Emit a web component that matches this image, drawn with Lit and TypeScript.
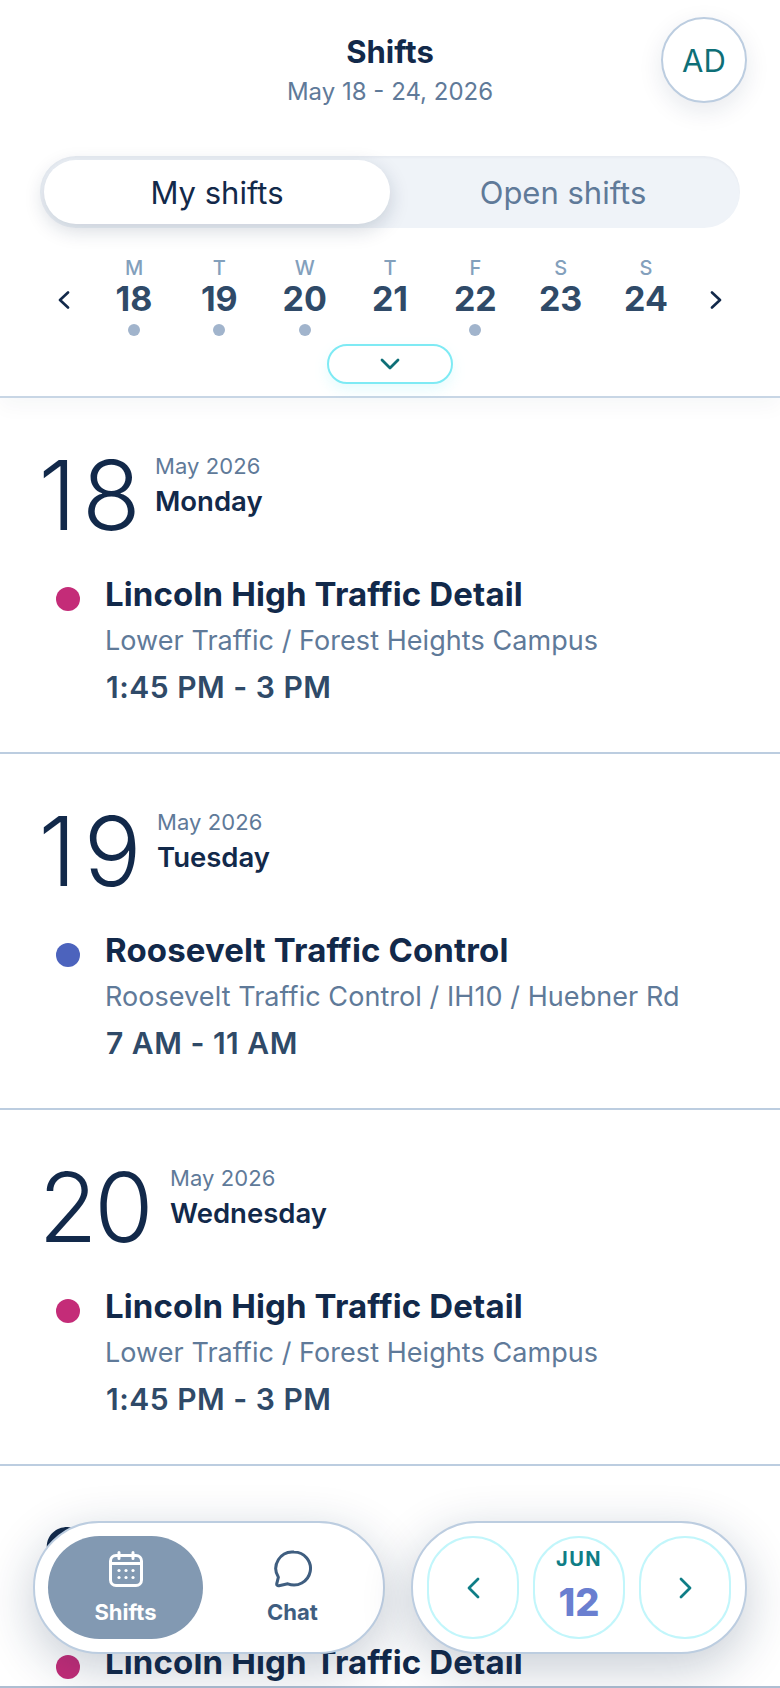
import { LitElement, html, css, svg } from "lit";
import { customElement } from "lit/decorators.js";

const week = [
  ["M", "18", true], ["T", "19", true], ["W", "20", true], ["T", "21", false],
  ["F", "22", true], ["S", "23", false], ["S", "24", false],
] as const;

const LINCOLN = { dot: "#c42c78", title: "Lincoln High Traffic Detail", sub: "Lower Traffic / Forest Heights Campus", time: "1:45 PM - 3 PM" };
const days = [
  { n: "18", ls: 5.6, w: 116.5, month: "May 2026", name: "Monday", ...LINCOLN },
  { n: "19", ls: 7.5, w: 118.5, month: "May 2026", name: "Tuesday", dot: "#4c63bd", title: "Roosevelt Traffic Control", sub: "Roosevelt Traffic Control / IH10 / Huebner Rd", time: "7 AM - 11 AM" },
  { n: "20", ls: -3.2, w: 131.5, month: "May 2026", name: "Wednesday", ...LINCOLN },
  { n: "22", ls: -3.2, w: 131.5, month: "May 2026", name: "Friday", ...LINCOLN },
];

const chev = (d: string, w: number, h: number, vb: string, sw: number) => html`<svg width=${w} height=${h} viewBox=${vb} fill="none" stroke="currentColor" stroke-width=${sw} stroke-linecap="round" stroke-linejoin="round">${svg`<path d=${d}></path>`}</svg>`;

@customElement("app-root")
export class AppRoot extends LitElement {
  static styles = css`
    :host { display: block; position: relative; width: 780px; height: 1688px; overflow: hidden; background: #fff; font-family: Inter, "Noto Sans", sans-serif; color: #12294a; }
    .top { position: relative; z-index: 2; background: #fff; border-bottom: 2px solid #c8d6e5; box-shadow: 0 8px 20px rgba(18, 41, 74, 0.04); }
    .header { position: relative; height: 150px; box-sizing: border-box; padding-top: 35px; display: flex; flex-direction: column; align-items: center; }
    .title { font-size: 31px; line-height: 34px; font-weight: 700; color: #12294a; }
    .range { font-size: 24px; line-height: 30px; margin-top: 8px; color: #5f7a99; }
    .avatar { position: absolute; left: 661px; top: 17px; width: 86px; height: 86px; box-sizing: border-box; border: 2px solid #bccde0; border-radius: 50%; background: #fff; color: #0e6f77; font-size: 31px; display: flex; align-items: center; justify-content: center; box-shadow: 0 8px 24px rgba(18, 41, 74, 0.1); }
    .toggle { margin: 6px 40px 0; height: 72px; box-sizing: border-box; padding: 4px; background: #eff3f8; border-radius: 36px; display: grid; grid-template-columns: 346px 1fr; box-shadow: inset 0 2px 2px rgba(18, 41, 74, 0.03); }
    .toggle div { display: flex; align-items: center; justify-content: center; font-size: 31px; color: #5f7a99; }
    .toggle .on { background: #fff; border-radius: 32px; color: #12294a; box-shadow: 0 6px 20px rgba(18, 41, 74, 0.18); }
    .week { display: grid; grid-template-columns: 1fr repeat(7, 85.33px) 1fr; margin-top: 28px; height: 88px; }
    .arrow { display: flex; align-items: center; color: #12294a; }
    .arrow.l { justify-content: flex-end; padding-right: 21px; }
    .arrow.r { justify-content: flex-start; padding-left: 21px; }
    .day { display: flex; flex-direction: column; align-items: center; }
    .dow { font-size: 20px; line-height: 24px; color: #83a0bc; font-weight: 500; }
    .num { font-size: 34px; line-height: 40px; font-weight: 700; color: #2f4a68; margin-top: -1px; }
    .mark { width: 12px; height: 12px; border-radius: 50%; background: #a1b4cc; margin-top: 5px; }
    .expand-row { display: flex; justify-content: center; height: 52px; }
    .expand { width: 126px; height: 40px; box-sizing: border-box; border: 2px solid #7eeaf4; border-radius: 20px; background: #fff; color: #0e6f77; display: flex; align-items: center; justify-content: center; box-shadow: 0 6px 14px rgba(126, 234, 244, 0.2); }
    .section { height: 356px; box-sizing: border-box; border-bottom: 2px solid #bccde0; padding: 46px 0 0 38.5px; }
    .head { display: flex; height: 96px; }
    .big { font-size: 96px; line-height: 96px; font-weight: 300; color: #12294a; padding-top: 3px; height: 93px; white-space: nowrap; }
    .meta { display: flex; flex-direction: column; padding-top: 8px; }
    .month { font-size: 22px; line-height: 28px; color: #5f7a99; letter-spacing: 0.1px; }
    .wd { font-size: 27.5px; line-height: 32px; font-weight: 600; margin-top: 5px; color: #12294a; }
    .shift { display: grid; grid-template-columns: 24px 1fr; column-gap: 25px; margin: 22px 0 0 17.5px; }
    .dot { width: 24px; height: 24px; border-radius: 50%; margin-top: 25px; }
    .stitle { font-size: 33px; line-height: 40px; font-weight: 700; color: #12294a; padding-top: 12px; letter-spacing: 0.13px; }
    .ssub { font-size: 27px; line-height: 32px; color: #5f7a99; margin-top: 11px; letter-spacing: 0.06px; }
    .stime { font-size: 30px; line-height: 34px; font-weight: 600; color: #2f4a68; margin-top: 13px; letter-spacing: 0.5px; padding-left: 1px; }
    .rule { position: absolute; left: 0; right: 0; bottom: 0; height: 2px; background: #aebed2; z-index: 3; }
    .nav { position: absolute; top: 1521px; left: 33px; width: 352px; height: 133px; box-sizing: border-box; z-index: 5; border: 2px solid #bccde0; border-radius: 66px; background: #fff; padding: 13px; display: grid; grid-template-columns: 155px 1fr; box-shadow: 0 14px 50px rgba(18, 41, 74, 0.24); }
    .tab { display: flex; flex-direction: column; align-items: center; padding-top: 14px; font-size: 22px; line-height: 28px; font-weight: 700; color: #3f5e80; }
    .tab svg { display: block; height: 38px; margin-bottom: 10px; }
    .tab.on { background: #8299b2; border-radius: 52px; color: #fff; }
    .tab.off { padding-left: 12px; }
    .pager { position: absolute; top: 1521px; left: 411px; width: 336px; height: 133px; box-sizing: border-box; z-index: 5; border: 2px solid #bccde0; border-radius: 66px; background: #fff; padding: 13px 14px; display: grid; grid-template-columns: repeat(3, 92px); column-gap: 14px; box-shadow: 0 14px 50px rgba(18, 41, 74, 0.24); }
    .pbtn { box-sizing: border-box; border: 2px solid #c2f6fb; border-radius: 46px; display: flex; flex-direction: column; align-items: center; justify-content: center; color: #0f7d86; }
    .mon { font-size: 20px; line-height: 24px; font-weight: 700; letter-spacing: 1.5px; color: #0f7d86; margin-top: -5px; }
    .dnum { font-size: 38px; line-height: 44px; font-weight: 800; color: #6a7fd0; margin-top: 9px; }
  `;

  render() {
    return html`
      <div class="top">
        <div class="header">
          <div class="title">Shifts</div>
          <div class="range">May 18 - 24, 2026</div>
          <div class="avatar">AD</div>
        </div>
        <div class="toggle"><div class="on">My shifts</div><div>Open shifts</div></div>
        <div class="week">
          <div class="arrow l">${chev("M10 1.5 2 9l8 7.5", 12, 18, "0 0 12 18", 2.6)}</div>
          ${week.map(([d, n, m]) => html`<div class="day"><div class="dow">${d}</div><div class="num">${n}</div>${m ? html`<div class="mark"></div>` : ""}</div>`)}
          <div class="arrow r">${chev("M2 1.5 10 9l-8 7.5", 12, 18, "0 0 12 18", 2.6)}</div>
        </div>
        <div class="expand-row"><div class="expand">${chev("M2 2l8 8 8-8", 20, 12, "0 0 20 12", 2.8)}</div></div>
      </div>
      ${days.map((d) => html`
        <div class="section">
          <div class="head"><div class="big" style="letter-spacing:${d.ls}px;width:${d.w}px">${d.n}</div><div class="meta"><div class="month">${d.month}</div><div class="wd">${d.name}</div></div></div>
          <div class="shift">
            <div class="dot" style="background:${d.dot}"></div>
            <div><div class="stitle">${d.title}</div><div class="ssub">${d.sub}</div><div class="stime">${d.time}</div></div>
          </div>
        </div>`)}
      <div class="rule"></div>
      <div class="nav">
        <div class="tab on">
          <svg width="34" height="36" viewBox="0 0 34 36" fill="none" stroke="currentColor" stroke-width="3" stroke-linecap="round" stroke-linejoin="round">
            <rect x="1.5" y="4.5" width="31" height="30" rx="5.5"></rect><path d="M1.5 12.5h31M10 1.5v6M24 1.5v6"></path>
            <g fill="currentColor" stroke="none"><circle cx="10" cy="19.5" r="1.6"></circle><circle cx="17" cy="19.5" r="1.6"></circle><circle cx="24" cy="19.5" r="1.6"></circle><circle cx="10" cy="26.5" r="1.6"></circle><circle cx="17" cy="26.5" r="1.6"></circle><circle cx="24" cy="26.5" r="1.6"></circle></g>
          </svg>
          Shifts
        </div>
        <div class="tab off">
          <svg width="38" height="38" viewBox="0 0 38 38" fill="none" stroke="currentColor" stroke-width="3" stroke-linecap="round" stroke-linejoin="round">
            <path d="M20 2a16.5 16.5 0 1 1-6.2 31.8L5 35.8c-1.6.3-2.6-.8-2.2-2.3l1.6-6.3A16.5 16.5 0 0 1 20 2z"></path>
          </svg>
          Chat
        </div>
      </div>
      <div class="pager">
        <div class="pbtn">${chev("M11 2 2 11l9 9", 13, 22, "0 0 13 22", 2.8)}</div>
        <div class="pbtn"><div class="mon">JUN</div><div class="dnum">12</div></div>
        <div class="pbtn">${chev("M2 2l9 9-9 9", 13, 22, "0 0 13 22", 2.8)}</div>
      </div>
    `;
  }
}
